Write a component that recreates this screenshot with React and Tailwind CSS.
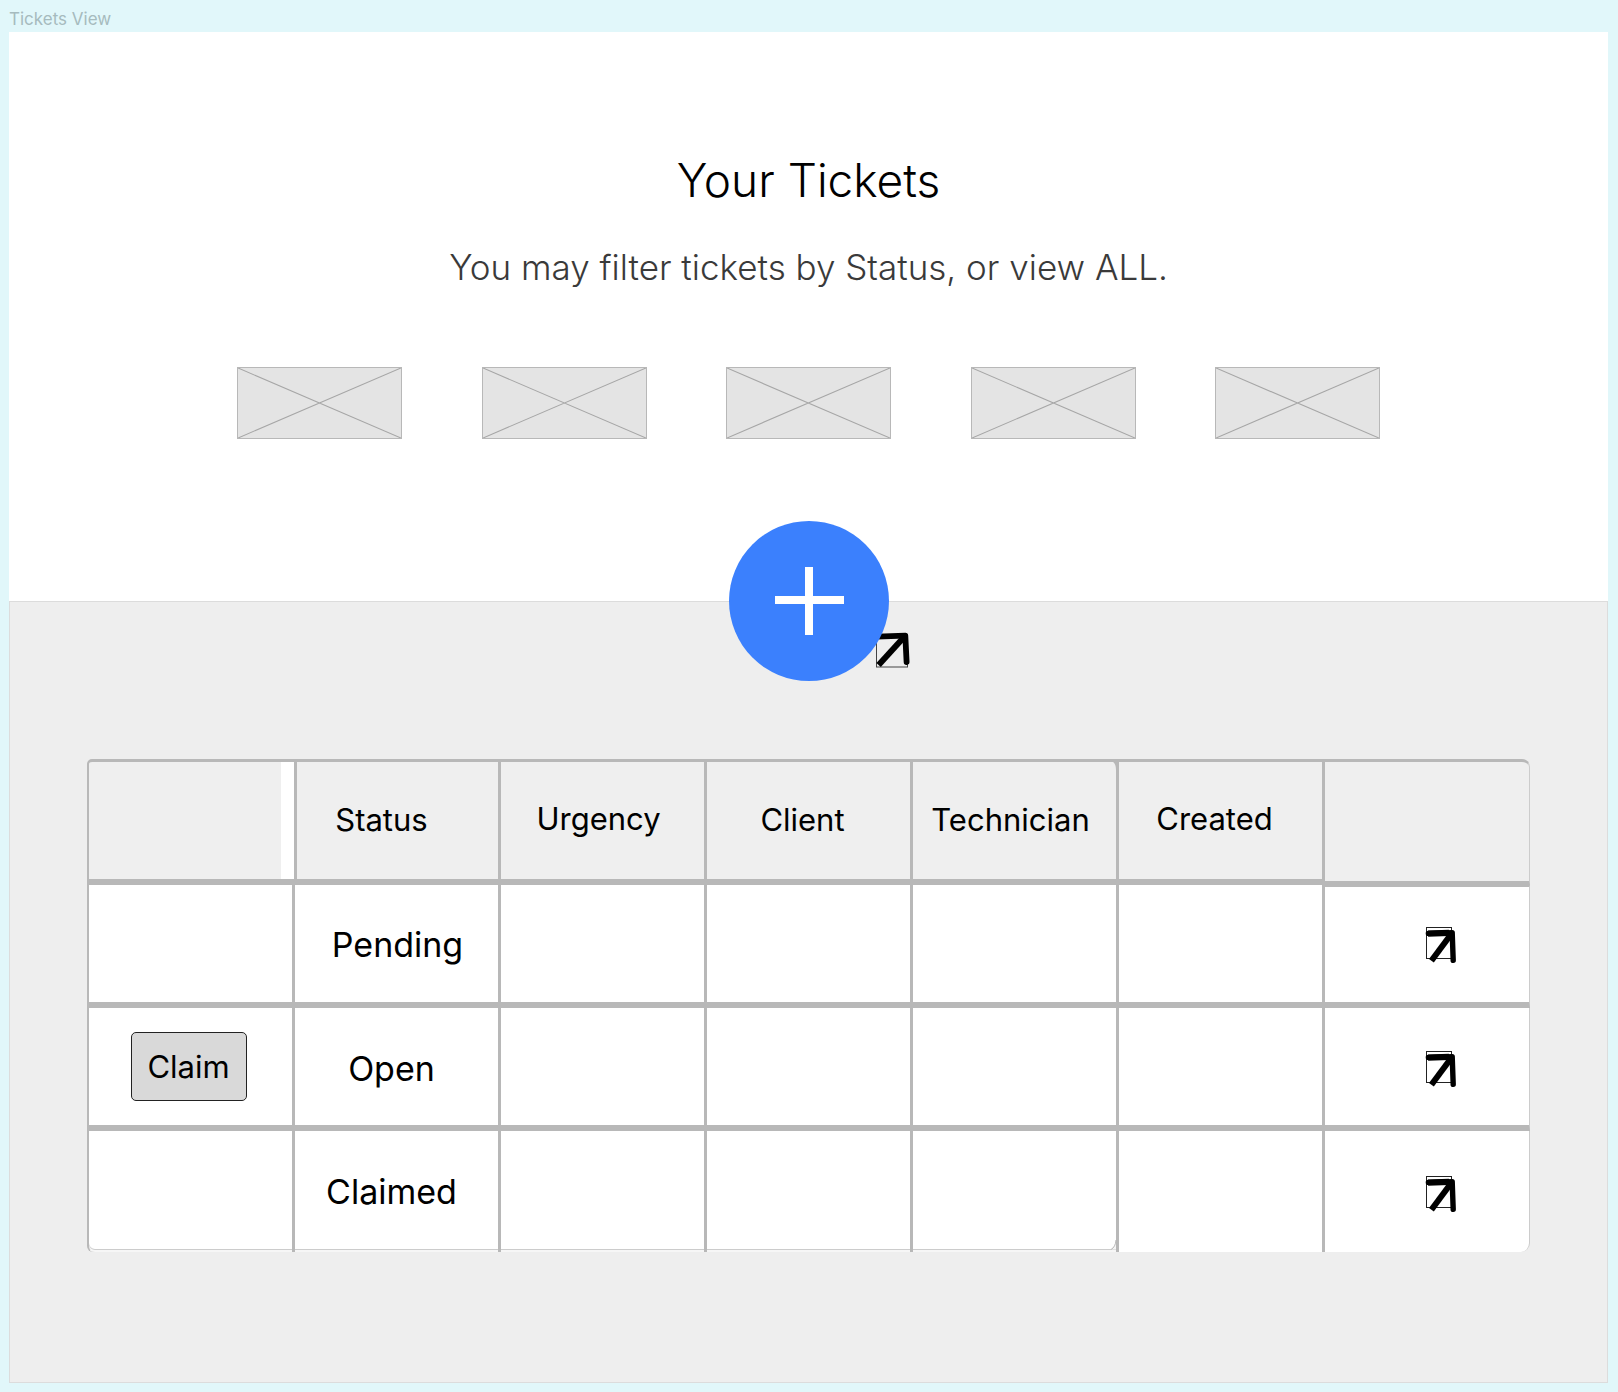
import React from "react";

const filters = ["Filter 1", "Filter 2", "Filter 3", "Filter 4", "Filter 5"];

const headers = [
  { label: "Status", pad: "border-l-2 pr-8 pb-[2px]" },
  { label: "Urgency", pad: "pr-2 pb-1" },
  { label: "Client", pad: "pr-3 pb-[2px]" },
  { label: "Technician", pad: "pr-2 pb-[2px]", corner: true },
  { label: "Created", pad: "pr-3 pb-1" },
];

const rows = [
  { status: "Pending", claimable: false, pad: "pl-[2px] pt-[2px]" },
  { status: "Open", claimable: true, pad: "pt-1 pr-[10px]" },
  { status: "Claimed", claimable: false, pad: "pr-[10px]" },
];

function Placeholder({ label }) {
  return (
    <button
      type="button"
      aria-label={label}
      className="h-[72px] w-[165px] border border-[#b8b8b8] bg-[#e4e4e4]"
    >
      <svg className="block h-full w-full" viewBox="0 0 163 70" preserveAspectRatio="none" aria-hidden="true">
        <path d="M0 0L163 70M0 70L163 0" stroke="#a6a6a6" strokeWidth="1.1" fill="none" />
      </svg>
    </button>
  );
}

function RowArrow() {
  return (
    <svg className="block" width="32" height="38" viewBox="0 0 32 38" fill="none" aria-hidden="true">
      <rect x="1.5" y="1.5" width="25" height="31" stroke="#222" />
      <path d="M3.4 7.4L27.2 6.6L28.2 34.4" stroke="#000" strokeWidth="5.4" strokeLinecap="round" strokeLinejoin="round" />
      <path d="M3 7.6L24 6.9" stroke="#000" strokeWidth="6.2" />
      <path d="M27 7L6.4 34.8" stroke="#000" strokeWidth="6" />
    </svg>
  );
}

function CornerArrow() {
  return (
    <svg className="absolute top-[110px] left-[145px]" width="38" height="40" viewBox="0 0 38 40" fill="none" aria-hidden="true">
      <rect x="2.5" y="5.5" width="31" height="30.5" stroke="#444" />
      <path d="M3 5.6L31.3 4.6L32.6 31" stroke="#000" strokeWidth="5.8" strokeLinecap="round" strokeLinejoin="round" />
      <path d="M31 5L4.6 34" stroke="#000" strokeWidth="6" />
    </svg>
  );
}

function AddTicket() {
  return (
    <div className="absolute -top-px left-1/2 size-[160px] -translate-x-1/2 -translate-y-1/2">
      <CornerArrow />
      <button
        type="button"
        aria-label="Add ticket"
        className="relative flex size-full items-center justify-center rounded-full bg-[#3b80fd]"
      >
        <svg width="70" height="70" viewBox="0 0 70 70" aria-hidden="true">
          <path d="M35 1V69M1 34H70" stroke="#fff" strokeWidth="8" />
        </svg>
      </button>
    </div>
  );
}

function TicketsTable() {
  return (
    <table className="w-full table-fixed border-separate border-spacing-0 text-black">
      <colgroup>
        <col className="w-[208px]" />
        <col span={5} />
        <col className="w-[205px]" />
      </colgroup>
      <thead>
        <tr className="h-[126px] text-[31px] leading-9">
          <th
            aria-label="Actions"
            className="rounded-tl-[5px] border-t-[3px] border-r border-b-[6px] border-l-2 border-[#b8b8b8] bg-[#efefef] shadow-[inset_-13px_0_0_#fff]"
          />
          {headers.map((h) => (
            <th
              key={h.label}
              scope="col"
              className={`relative border-t-[3px] border-r-[3px] border-b-[6px] border-[#b8b8b8] bg-[#efefef] p-0 text-center font-normal ${h.pad}`}
            >
              {h.label}
              {h.corner && (
                <svg className="absolute top-0 right-0" width="3" height="8" viewBox="0 0 3 8" aria-hidden="true">
                  <path d="M0 0H3V8Q3 2 0 0Z" fill="#b8b8b8" />
                </svg>
              )}
            </th>
          ))}
          <th
            aria-label="Open"
            className="rounded-tr-[8px] border-t-[3px] border-r border-b-4 border-[#b8b8b8] border-r-[#cccccc] bg-[#efefef]"
          />
        </tr>
      </thead>
      <tbody>
        {rows.map((row, i) => {
          const last = i === rows.length - 1;
          const line = last
            ? "border-[#b8b8b8] shadow-[inset_0_-2px_0_#f6f6f6,inset_0_-3px_0_#cccccc]"
            : "border-b-[6px] border-[#b8b8b8]";
          const plain = last ? "border-[#b8b8b8]" : "border-b-[6px] border-[#b8b8b8]";
          return (
            <tr key={row.status} className={last ? "h-[121px]" : "h-[123px]"}>
              <td className={`border-r-[3px] border-l-2 bg-white p-0 pr-1 ${line} ${last ? "rounded-bl-[6px]" : ""}`}>
                {row.claimable && (
                  <button
                    type="button"
                    className="mx-auto block h-[69px] w-[116px] rounded-[5px] border border-[#222] bg-[#d9d9d9] text-[31px] leading-9"
                  >
                    Claim
                  </button>
                )}
              </td>
              <td className={`border-r-[3px] bg-white p-0 text-center text-[34px] leading-10 ${row.pad} ${line}`}>
                {row.status}
              </td>
              <td className={`border-r-[3px] bg-white ${line}`} />
              <td className={`border-r-[3px] bg-white ${line}`} />
              <td className={`relative border-r-[3px] bg-white ${line}`}>
                {last && (
                  <svg className="absolute right-0 bottom-[2px]" width="5" height="10" viewBox="0 0 5 10" aria-hidden="true">
                    <path d="M5 0Q4.5 7 0 9.5H5Z" fill="#f6f6f6" />
                    <path d="M5 0Q4.5 7 0 9.5" fill="none" stroke="#b8b8b8" />
                  </svg>
                )}
              </td>
              <td className={`border-r-[3px] bg-white ${plain}`} />
              <td
                className={`border-r border-r-[#cccccc] bg-white p-0 pl-[100px] ${plain} ${i === 0 ? "border-t-2" : "pt-1"} ${last ? "rounded-br-[9px]" : ""}`}
              >
                <a href="#ticket" aria-label={`Open ${row.status} ticket`} className="inline-block align-middle">
                  <RowArrow />
                </a>
              </td>
            </tr>
          );
        })}
      </tbody>
    </table>
  );
}

export default function App() {
  return (
    <div className="min-h-screen bg-[#e1f7fa] pr-[10px] pb-[9px] pl-[9px] font-['Inter',sans-serif]">
      <p className="h-8 pt-2 text-[17px] leading-[22px] text-[#a6bbbe]">Tickets View</p>
      <main>
        <section className="flex h-[569px] flex-col items-center bg-white pt-[120px]">
          <h1 className="text-[46px] leading-[56px] font-[350] text-black">Your Tickets</h1>
          <p className="mt-[39px] text-[35px] leading-10 font-[350] text-[#3a3a3a]">
            You may filter tickets by Status, or view ALL.
          </p>
          <div className="mt-[80px] flex w-full max-w-[1143px] justify-between">
            {filters.map((f) => (
              <Placeholder key={f} label={f} />
            ))}
          </div>
        </section>
        <section className="relative border border-[#dcdcdc] bg-[#eeeeee] px-[77px] pt-[157px] pb-[130px]">
          <AddTicket />
          <TicketsTable />
        </section>
      </main>
    </div>
  );
}
